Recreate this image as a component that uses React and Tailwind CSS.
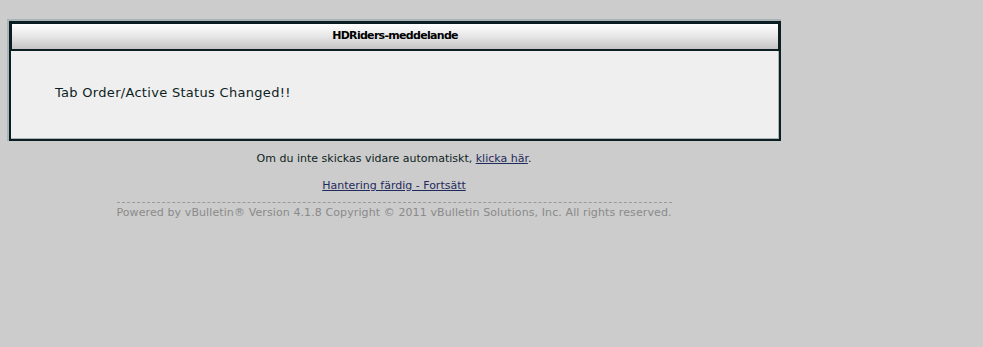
import React from "react";

const font = { fontFamily: "Verdana, 'DejaVu Sans', sans-serif" };

const MessageBox = ({ title, message }) => (
  <div className="border-t-2 border-l-2 border-[#a9b4b9] w-[774px]">
    <div className="border-2 border-[#0d1e23] bg-[#efefef]">
      <div className="border border-[#0d1e23] border-b-2 h-[28px] flex items-center justify-center bg-gradient-to-b from-[#ffffff] via-[#e6e6e6] to-[#c4c4c4] text-[11px] font-bold tracking-[-0.7px] text-black">
        {title}
      </div>
      <div className="h-[88px] flex items-center pl-[44px] pb-[4px] text-[13px] tracking-[0.3px] text-[#0d1e23] border-b border-r border-[#a9b4b9]">
        {message}
      </div>
    </div>
  </div>
);

export default function App() {
  return (
    <div className="min-h-[347px] bg-[#cccccc] pt-[19px] pl-[7px]" style={font}>
      <div className="w-[774px]">
        <MessageBox
          title="HDRiders-meddelande"
          message="Tab Order/Active Status Changed!!"
        />
        <div className="flex flex-col items-center text-[11px] text-[#0d1e23]">
          <p className="mt-[11px] leading-[14px]">
            Om du inte skickas vidare automatiskt,{" "}
            <a href="#" className="text-[#1f2b5c] underline">klicka här</a>.
          </p>
          <a href="#" className="mt-[13px] leading-[14px] text-[#1f2b5c] underline">
            Hantering färdig - Fortsätt
          </a>
          <div className="mt-[9px] w-[555px] border-t border-dashed border-[#999999] pt-[3px] flex justify-center text-[#8a8a8a] leading-[14px] tracking-[0.1px] whitespace-nowrap">
            Powered by vBulletin® Version 4.1.8 Copyright © 2011 vBulletin Solutions, Inc. All rights reserved.
          </div>
        </div>
      </div>
    </div>
  );
}
